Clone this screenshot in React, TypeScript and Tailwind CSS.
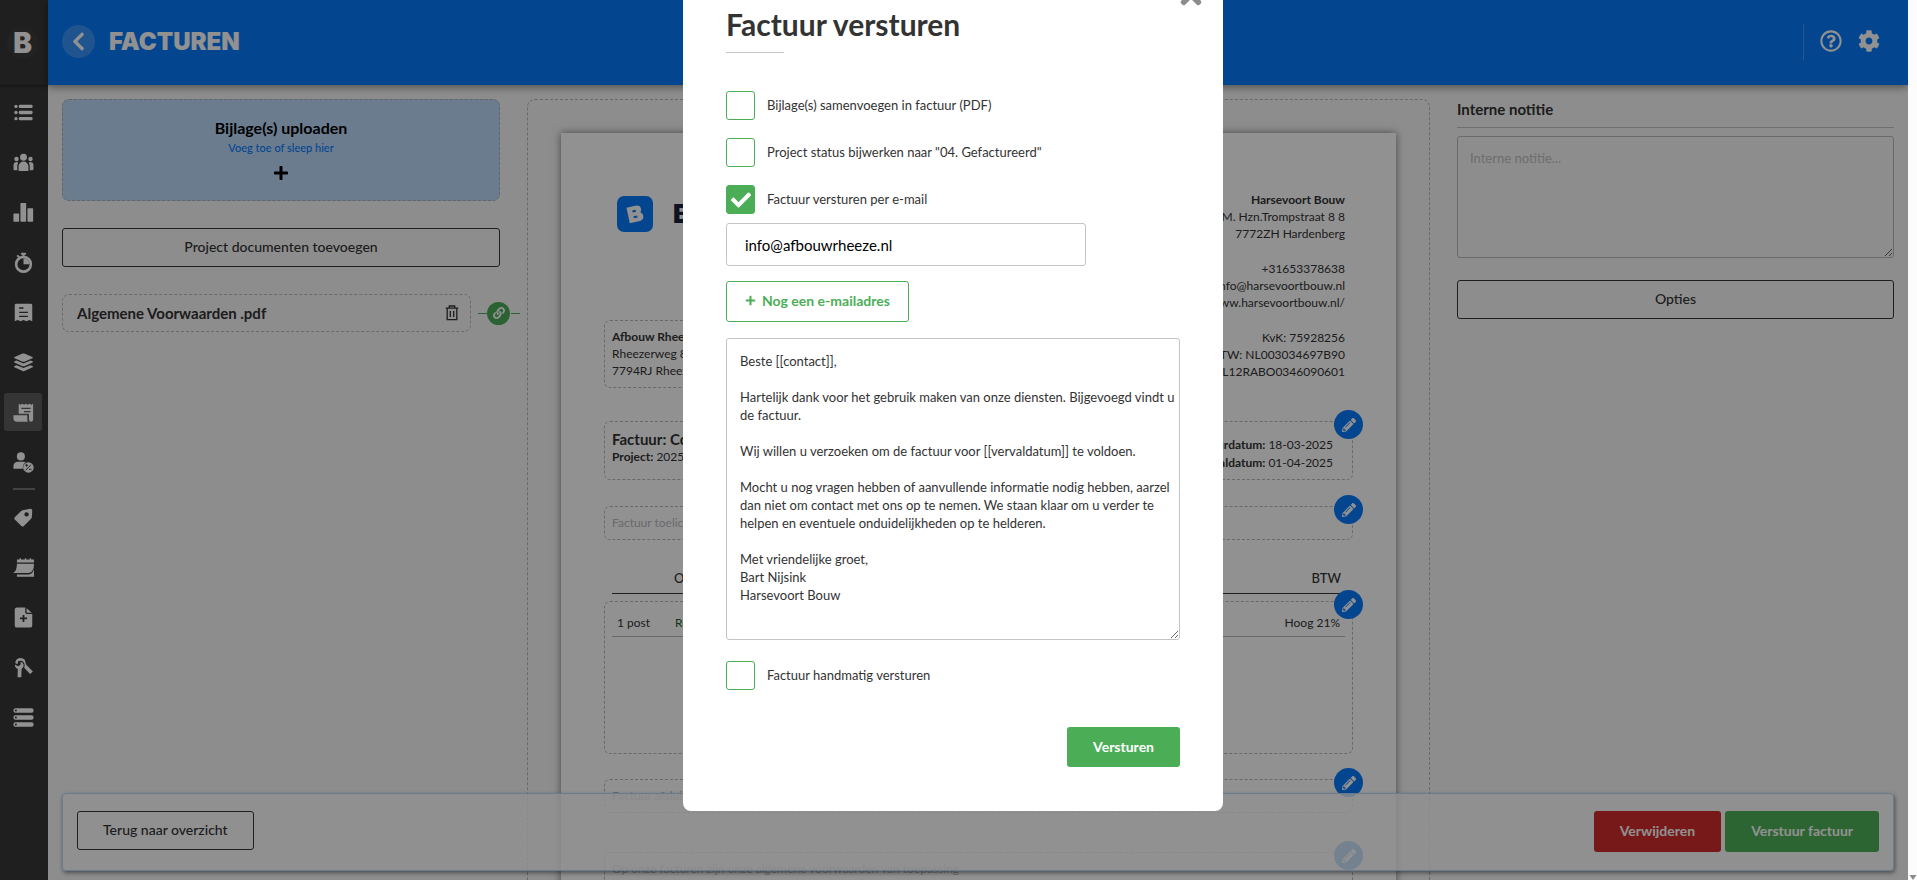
import React, { useState } from "react";
import {
  FaCheck,
  FaChevronLeft,
  FaCog,
  FaLink,
  FaPencilAlt,
  FaPlus,
  FaRegQuestionCircle,
  FaTimes,
} from "react-icons/fa";

const MESSAGE = `Beste [[contact]],

Hartelijk dank voor het gebruik maken van onze diensten. Bijgevoegd vindt u de factuur.

Wij willen u verzoeken om de factuur voor [[vervaldatum]] te voldoen.

Mocht u nog vragen hebben of aanvullende informatie nodig hebben, aarzel dan niet om contact met ons op te nemen. We staan klaar om u verder te helpen en eventuele onduidelijkheden op te helderen.

Met vriendelijke groet,
Bart Nijsink
Harsevoort Bouw`;

type NavEntry = { label: string; active?: boolean; icon: React.ReactNode };

const mainNav: NavEntry[] = [
  {
    label: "Overzicht",
    icon: (
      <>
        <circle cx="3.400" cy="5" r="1.900" />
        <circle cx="3.400" cy="12" r="1.900" />
        <circle cx="3.400" cy="19" r="1.900" />
        <rect x="6.600" y="3.100" width="15.800" height="3.800" rx="1.500" />
        <rect x="6.600" y="10.100" width="15.800" height="3.800" rx="1.500" />
        <rect x="6.600" y="17.100" width="15.800" height="3.800" rx="1.500" />
      </>
    ),
  },
  {
    label: "Relaties",
    icon: (
      <>
        <circle cx="12" cy="6" r="3.900" />
        <circle cx="4" cy="8" r="2.500" />
        <circle cx="20" cy="8" r="2.500" />
        <path d="M6.400 21v-4.600a5.600 5.600 0 0 1 11.200 0V21q0 .8-.8.8H7.200q-.8 0-.8-.8z" />
        <path d="M.6 19.400v-4.600A3.400 3.400 0 0 1 5.200 11.700q.8.300.6.800-.9 1.600-.9 3.500v4.800H1.800q-1.200 0-1.200-1.400z" />
        <path d="M23.400 19.400v-4.600a3.400 3.400 0 0 0-4.600-3.100q-.8.300-.6.800.9 1.600.9 3.500v4.800h3.100q1.200 0 1.200-1.400z" />
      </>
    ),
  },
  {
    label: "Statistieken",
    icon: (
      <>
        <rect x="0.500" y="13" width="6.500" height="9.500" rx="0.800" />
        <rect x="8.500" y="1" width="6.500" height="21.500" rx="0.800" />
        <rect x="16.500" y="7" width="6.500" height="15.500" rx="0.800" />
      </>
    ),
  },
  {
    label: "Uren",
    icon: (
      <>
        <circle cx="12" cy="14" r="8.400" fill="none" stroke="currentColor" strokeWidth="3" />
        <path d="M12 7v7h7a7 7 0 0 0-7-7z" />
        <rect x="9" y="0.800" width="6" height="2.200" rx="0.800" />
        <rect x="10.900" y="2" width="2.200" height="3.500" />
        <path d="m4 4.500 1.600-1.500 2.200 2.200-1.600 1.500z" />
      </>
    ),
  },
  {
    label: "Offertes",
    icon: (
      <path
        fillRule="evenodd"
        d="M3.500 2h17Q22 2 22 3.500V22l-3.300-1.300L15.400 22 12 20.700 8.600 22l-3.300-1.300L2 22V3.500Q2 2 3.500 2zM7 6v1.600h5V6zm0 5v1.600h10V11zm0 4.600v1.600h10v-1.600z"
      />
    ),
  },
  {
    label: "Projecten",
    icon: (
      <>
        <path d="M11 1.800q1-.4 2 0L22.200 5.700q1 .7 0 1.400L13 11q-1 .4-2 0L1.800 7.100q-1-.7 0-1.400z" />
        <path d="m1.400 10.800 2.600-1L12 13l8-3.200 2.600 1q.8.800-.2 1.300L13 16.200q-1 .4-2 0l-9.400-4.100q-1-.5-.2-1.300z" />
        <path d="m1.400 16.200 2.600-1 8 3.200 8-3.200 2.600 1q.8.800-.2 1.300L13 21.800q-1 .4-2 0l-9.400-4.300q-1-.5-.2-1.300z" />
      </>
    ),
  },
  {
    label: "Facturen",
    active: true,
    icon: (
      <>
        <path
          fillRule="evenodd"
          d="M6.500 2 8.400 3l2.100-1 2.100 1 2.100-1 2.100 1 2.100-1L21 3l2-1V20q0 2.500-2.400 2.500-2.300 0-2.300-2.500v-6.500H6.500zM9.500 6.500V8h10.500V6.500zm3 3.800v1.500H20v-1.500z"
        />
        <path d="M.5 15h15.800v5q0 1.500.7 2.500H5q-4.500 0-4.500-4z" />
      </>
    ),
  },
  {
    label: "Btw",
    icon: (
      <>
        <circle cx="9" cy="5" r="4.600" />
        <path d="M.5 19v-2.500Q.5 11 6 11h6q1.500 0 2.600.4-3.600 2.500-3.400 7.600z" />
        <circle cx="17.600" cy="17.600" r="6" />
        <path d="m14.500 20.800 6-6.200M14 15.200h3M15.500 13.700v3M18.300 20.200q1.300-1.300 2.900 0" stroke="#383838" strokeWidth="1.100" fill="none" />
      </>
    ),
  },
];

const extraNav: NavEntry[] = [
  {
    label: "Artikelen",
    icon: (
      <path
        fillRule="evenodd"
        d="M11 3.600 20 2q1.800 0 2 2l-.4 7q-.1 1.500-1.200 2.600l-8 8q-1.400 1.200-2.800 0L2 14.400q-1.200-1.400 0-2.800l7-6.800q.9-.9 2-1.200zM15.500 6a2.500 2.500 0 1 0 .01 0z"
      />
    ),
  },
  {
    label: "Planning",
    icon: (
      <>
        <path d="M4.500 2.800h3V1.500h1.600v1.300h4.400V1.500h1.600v1.300h4V1.500h1.600v1.300h3.300v3.400H4.500z" />
        <path d="M4.500 7.600H24q0 10-6 10.600H0q4.500-2 4.500-10.600z" />
        <path d="M24 14v8.500H4.500v-2.600H18q4.500-.2 6-5.900z" />
      </>
    ),
  },
  {
    label: "Nieuw document",
    icon: (
      <>
        <path
          fillRule="evenodd"
          d="M4.500.5H14V6q0 2 2 2h6v13q0 2.500-2.500 2.500h-15Q2 23.500 2 21V3Q2 .5 4.500.5zM11 9v3H8v2h3v3h2v-3h3v-2h-3V9z"
        />
        <path d="M15.500 1.500 21.500 6.500h-5q-1 0-1-1z" />
      </>
    ),
  },
  {
    label: "Onderhoud",
    icon: (
      <>
        <path d="M2.200 8.500 6 10.500l2.800-1.800-.2-3 2.200.5q2.200 2.400.9 5.300-.6 1.400-1.900 2.200L9.500 23H5.200l.3-9.200Q2 12.200 2.200 8.500z" />
        <path d="M2.600 6.800Q3 2 8 1.200q3.400-.3 5.600 2.200l1.300 5.300 7.800 7.800-3.200 3-6.700-7.200q1.700-5-2.300-7.700-3.500-1.200-5 .8 1 2.200-.9 2.700z" />
      </>
    ),
  },
  {
    label: "Beheer",
    icon: (
      <>
        {[1.5, 9.5, 17.5].map((y) => (
          <g key={y}>
            <rect x="0.500" y={y} width="23" height="5" rx="2.300" />
            <circle cx="3.300" cy={y + 2.5} r="1.100" fill="#383838" />
          </g>
        ))}
      </>
    ),
  },
];

function NavList({ items }: { items: NavEntry[] }) {
  return (
    <ul className="flex flex-col items-center gap-3">
      {items.map((item) => (
        <li key={item.label}>
          <a
            href="#"
            aria-label={item.label}
            className={`flex h-[38px] w-[38px] items-center justify-center rounded-[3px] text-white ${item.active ? "bg-[#5d5d5d]" : ""}`}
          >
            <svg viewBox="0 0 24 24" className="h-[21px] w-[21px]" fill="currentColor">
              {item.icon}
            </svg>
          </a>
        </li>
      ))}
    </ul>
  );
}

function EditButton() {
  return (
    <button
      aria-label="Bewerken"
      className="absolute -top-3 -right-[11px] flex h-[29px] w-[29px] items-center justify-center rounded-full bg-[#077bfb] text-white"
    >
      <FaPencilAlt className="h-[14px] w-[14px]" />
    </button>
  );
}

function Box({ className = "", editable = true, children }: { className?: string; editable?: boolean; children?: React.ReactNode }) {
  return (
    <div className={`relative rounded-[6px] border border-dashed border-[#b9b9b9] ${className}`}>
      {children}
      {editable && <EditButton />}
    </div>
  );
}

function CheckRow({ id, label, checked, onChange }: { id: string; label: string; checked: boolean; onChange: () => void }) {
  return (
    <div className="flex items-center gap-3">
      <span className="grid h-[29px] w-[29px] place-items-center">
        <input
          id={id}
          type="checkbox"
          checked={checked}
          onChange={onChange}
          className="col-start-1 row-start-1 h-full w-full appearance-none rounded-[3px] border border-[#4bae57] bg-white checked:bg-[#4bae57]"
        />
        {checked && <FaCheck className="pointer-events-none col-start-1 row-start-1 h-5 w-5 text-white" />}
      </span>
      <label htmlFor={id} className="pb-0.5 text-[13px] leading-[18px]">
        {label}
      </label>
    </div>
  );
}

function Sidebar() {
  return (
    <nav className="w-12 shrink-0 bg-[#383838]">
      <div className="flex h-[85px] items-center justify-center pr-[3px] shadow-[0_1px_3px_rgba(0,0,0,0.4)]">
        <span className="flex h-8 w-8 items-center justify-center rounded-full bg-[#3d3d3d] font-[Inter,sans-serif] text-[28px] leading-8 font-black text-white">
          B
        </span>
      </div>
      <div className="flex flex-col items-center pt-2 pr-[2px]">
        <NavList items={mainNav} />
        <div className="mt-[7px] mb-[8px] ml-[2px] h-[2px] w-[22px] bg-[#777]" />
        <NavList items={extraNav} />
      </div>
    </nav>
  );
}

function Header() {
  return (
    <header className="relative flex h-[85px] shrink-0 items-center bg-[#077bfb] pr-[28px] pb-0.5 pl-[14px] text-white shadow-[0_2px_8px_rgba(0,0,0,0.45)]">
      <button aria-label="Terug" className="flex h-[33px] w-[33px] items-center justify-center rounded-full bg-white/20">
        <FaChevronLeft className="h-[21px] w-[21px]" />
      </button>
      <h1 className="ml-[14px] font-[Inter,sans-serif] text-[24px] leading-8 font-black">FACTUREN</h1>
      <div className="ml-auto flex items-center gap-4 border-l border-white/25 pt-[6px] pb-2 pl-4">
        <button aria-label="Help">
          <FaRegQuestionCircle className="h-[22px] w-[22px]" />
        </button>
        <button aria-label="Instellingen">
          <FaCog className="h-[22px] w-[22px]" />
        </button>
      </div>
    </header>
  );
}

function Attachments() {
  return (
    <section className="w-1/4 pr-[13px] pl-[14px]">
      <button className="flex h-[102px] w-full flex-col items-center rounded-[7px] border border-dashed border-[#b0b0b0] bg-[#bddbfc] pt-[18px] text-black">
        <span className="text-[16px] leading-5 font-bold">Bijlage(s) uploaden</span>
        <span className="text-[11px] leading-5 font-medium text-[#077bfb]">Voeg toe of sleep hier</span>
        <FaPlus className="mt-[7px] h-4 w-4" />
      </button>
      <button className="mt-[27px] h-[39px] w-full rounded-[3px] border border-[#383838] pb-0.5 text-[14px] font-medium">
        Project documenten toevoegen
      </button>
      <div className="mt-[27px] flex items-center">
        <div className="flex h-[38px] flex-1 items-center justify-between rounded-[7px] border border-dashed border-[#bbb] pr-[11px] pl-[14px]">
          <span className="text-[15px] leading-5 font-bold">Algemene Voorwaarden .pdf</span>
          <button aria-label="Bijlage verwijderen">
            <svg viewBox="0 0 14 16" className="h-4 w-[14px]" fill="none" stroke="currentColor" strokeWidth="1.300">
              <path d="M.8 3.200h12.400M4.300 3V1h5.400v2M2.200 3.400v11.200h9.600V3.400M5.300 6v6M8.700 6v6" />
            </svg>
          </button>
        </div>
        <div className="-mr-5 ml-[7px] flex items-center">
          <span className="h-px w-[9px] bg-[#4bae57]" />
          <button aria-label="Koppeling" className="flex h-[23px] w-[23px] items-center justify-center rounded-full bg-[#4bae57] text-white">
            <FaLink className="h-3 w-3" />
          </button>
          <span className="ml-px h-px w-[9px] bg-[#4bae57]" />
        </div>
      </div>
    </section>
  );
}

function Invoice() {
  return (
    <section className="w-1/2 pr-[13px] pl-[14px]">
      <div className="rounded-[8px] border border-dashed border-[#b9b9b9] p-[33px] pb-20">
        <article className="bg-white px-[43px] pb-40 shadow-[0_0_8px_rgba(0,0,0,0.5)]">
          <div className="flex items-start justify-between px-2 pt-[58px] text-[12px] leading-[17px]">
            <div className="flex items-center gap-5 pt-[5px] pl-[5px]">
              <svg viewBox="0 0 36 36" className="h-9 w-9">
                <rect width="36" height="36" rx="7" fill="#077bfb" />
                <path
                  fillRule="evenodd"
                  fill="#fff"
                  transform="rotate(-12 18 18)"
                  d="M11 10h9q5 0 5 4.300 0 2-1.500 3.200 2.200 1.200 2.200 3.700 0 4.800-5.500 4.800H11zm5 4v2h3.500v-2zm0 6v2h3.800v-2z"
                />
              </svg>
              <span className="font-[Inter,sans-serif] text-[26px] leading-8 font-black text-[#1a2340]">BOUW</span>
            </div>
            <div className="text-right">
              <p className="font-bold">Harsevoort Bouw</p>
              <p>M. Hzn.Trompstraat 8 8</p>
              <p>7772ZH Hardenberg</p>
              <p className="mt-[18px]">+31653378638</p>
              <p>info@harsevoortbouw.nl</p>
              <p>www.harsevoortbouw.nl/</p>
              <p className="mt-[18px]">KvK: 75928256</p>
              <p>BTW: NL003034697B90</p>
              <p>NL12RABO0346090601</p>
            </div>
          </div>
          <Box editable={false} className="-mt-[60px] h-[68px] w-[300px] px-[7px] pt-[7px] text-[12px] leading-[17px]">
            <p className="font-bold">Afbouw Rheeze</p>
            <p>Rheezerweg 8</p>
            <p>7794RJ Rheeze</p>
          </Box>
          <Box className="mt-[33px] flex h-[59px] justify-between pr-[19px] pl-[7px] text-[12px] leading-[18px]">
            <div className="pt-2">
              <p className="text-[15px] font-bold">Factuur: Concept</p>
              <p>
                <b>Project:</b> 2025
              </p>
            </div>
            <div className="pt-[14px] text-right">
              <p>
                <b>Factuurdatum:</b> 18-03-2025
              </p>
              <p>
                <b>Vervaldatum:</b> 01-04-2025
              </p>
            </div>
          </Box>
          <Box className="mt-[26px] h-[34px] px-[7px] text-[12px] leading-8 text-[#bbb]">Factuur toelichting</Box>
          <div className="mx-2 mt-[26px] flex h-[28px] border-b border-[#383838] pr-1 text-[13px] leading-[24px] font-medium">
            <span className="w-[62px]" />
            <span className="flex-1">Omschrijving</span>
            <span>BTW</span>
          </div>
          <Box className="mt-[7px] h-[153px] px-[7px] pt-[7px]">
            <div className="flex border-b border-[#b9b9b9] px-[5px] text-[12px] leading-[27px]">
              <span className="w-[58px]">1 post</span>
              <span className="flex-1 text-[#255c2c]">Regel</span>
              <span>Hoog 21%</span>
            </div>
          </Box>
          <Box className="mt-[25px] h-[34px] px-[7px] text-[12px] leading-8 text-[#bbb]">Factuur afsluiting</Box>
          <Box className="mt-[39px] h-[60px] px-[7px] text-[12px] leading-8 text-[#bbb]">
            Op onze facturen zijn onze algemene voorwaarden van toepassing
          </Box>
        </article>
      </div>
    </section>
  );
}

function Notes() {
  return (
    <section className="w-1/4 pr-[14px] pl-[14px]">
      <label htmlFor="note" className="block border-b border-[#c4c4c4] pb-2 text-[15px] leading-5 font-bold">
        Interne notitie
      </label>
      <textarea
        id="note"
        placeholder="Interne notitie..."
        className="mt-2 block h-[122px] w-full rounded-[3px] border border-[#bbb] px-3 py-3 text-[13px] leading-[18px] placeholder:text-[#c0c0c0]"
      />
      <button className="mt-[22px] h-[39px] w-full rounded-[3px] border border-[#383838] pb-0.5 text-[14px] font-medium">Opties</button>
    </section>
  );
}

function ActionBar() {
  return (
    <div className="absolute right-[14px] bottom-[9px] left-[14px] flex items-start gap-1 rounded-[4px] border border-[#b8d8fb] bg-white/80 px-[14px] pt-[17px] pb-[18px] text-[14px] font-bold shadow-[1px_2px_4px_rgba(0,0,0,0.45)]">
      <button className="mr-auto h-[39px] rounded-[3px] border border-[#383838] px-[25px] pb-0.5 font-medium">Terug naar overzicht</button>
      <button className="h-[41px] rounded-[3px] bg-[#d12c2c] px-[26px] pb-0.5 text-white">Verwijderen</button>
      <button className="h-[41px] rounded-[3px] bg-[#4fb259] px-[26px] pb-0.5 text-white">Verstuur factuur</button>
    </div>
  );
}

function SendDialog() {
  const [merge, setMerge] = useState(false);
  const [status, setStatus] = useState(false);
  const [mail, setMail] = useState(true);
  const [manual, setManual] = useState(false);
  return (
    <div role="dialog" aria-labelledby="send-title" className="relative -mt-10 h-fit w-[540px] rounded-[8px] bg-white px-[43px] pt-[48px] pb-[44px]">
      <button aria-label="Sluiten" className="absolute top-[20px] right-[17px] text-[#8c8c8c]">
        <FaTimes className="h-[30px] w-[30px]" />
      </button>
      <h2 id="send-title" className="text-[30px] leading-8 font-bold">
        Factuur versturen
      </h2>
      <div className="mt-3 mb-[38px] h-px w-[58px] bg-[#c4c4c4]" />
      <div className="flex flex-col gap-[18px]">
        <CheckRow id="merge" label="Bijlage(s) samenvoegen in factuur (PDF)" checked={merge} onChange={() => setMerge(!merge)} />
        <CheckRow id="status" label={'Project status bijwerken naar "04. Gefactureerd"'} checked={status} onChange={() => setStatus(!status)} />
        <CheckRow id="mail" label="Factuur versturen per e-mail" checked={mail} onChange={() => setMail(!mail)} />
      </div>
      <input
        type="email"
        aria-label="E-mailadres"
        defaultValue="info@afbouwrheeze.nl"
        className="mt-[9px] block h-[43px] w-[360px] rounded-[3px] border border-[#c4c4c4] px-[18px] text-[15px] text-black"
      />
      <button className="mt-[15px] flex h-[41px] items-center gap-[6px] rounded-[3px] border border-[#4bae57] px-[18px] pb-0.5 text-[14px] font-bold text-[#4bae57]">
        <FaPlus className="h-[11px] w-[11px]" />
        Nog een e-mailadres
      </button>
      <textarea
        aria-label="Bericht"
        defaultValue={MESSAGE}
        className="mt-4 block h-[302px] w-full rounded-[3px] border border-[#c4c4c4] pt-[13px] pr-[2px] pl-[13px] text-[13px] leading-[18px]"
      />
      <div className="mt-[21px]">
        <CheckRow id="manual" label="Factuur handmatig versturen" checked={manual} onChange={() => setManual(!manual)} />
      </div>
      <button className="mt-[37px] ml-auto block h-10 rounded-[3px] bg-[#4bae57] px-[26px] pb-0.5 text-[14px] font-bold text-white">Versturen</button>
    </div>
  );
}

export default function App() {
  return (
    <div className="flex h-screen overflow-hidden font-[Lato,sans-serif] text-[#333]">
      <div className="relative flex min-w-0 flex-1 overflow-hidden bg-[#f8f8f8]">
        <Sidebar />
        <div className="relative flex min-w-0 flex-1 flex-col">
          <Header />
          <main className="flex min-h-0 flex-1 items-start overflow-hidden pt-[14px]">
            <Attachments />
            <Invoice />
            <Notes />
          </main>
          <ActionBar />
        </div>
        <div className="absolute inset-0 flex justify-center overflow-hidden bg-black/43 pr-0.5">
          <SendDialog />
        </div>
      </div>
      <div className="flex w-[9px] shrink-0 flex-col justify-end bg-[#fcfcfc]">
        <svg viewBox="0 0 9 6" className="h-[6px] w-[9px]" fill="#8b8b8b">
          <path d="M1.500 1h7L5 6z" />
        </svg>
      </div>
    </div>
  );
}
